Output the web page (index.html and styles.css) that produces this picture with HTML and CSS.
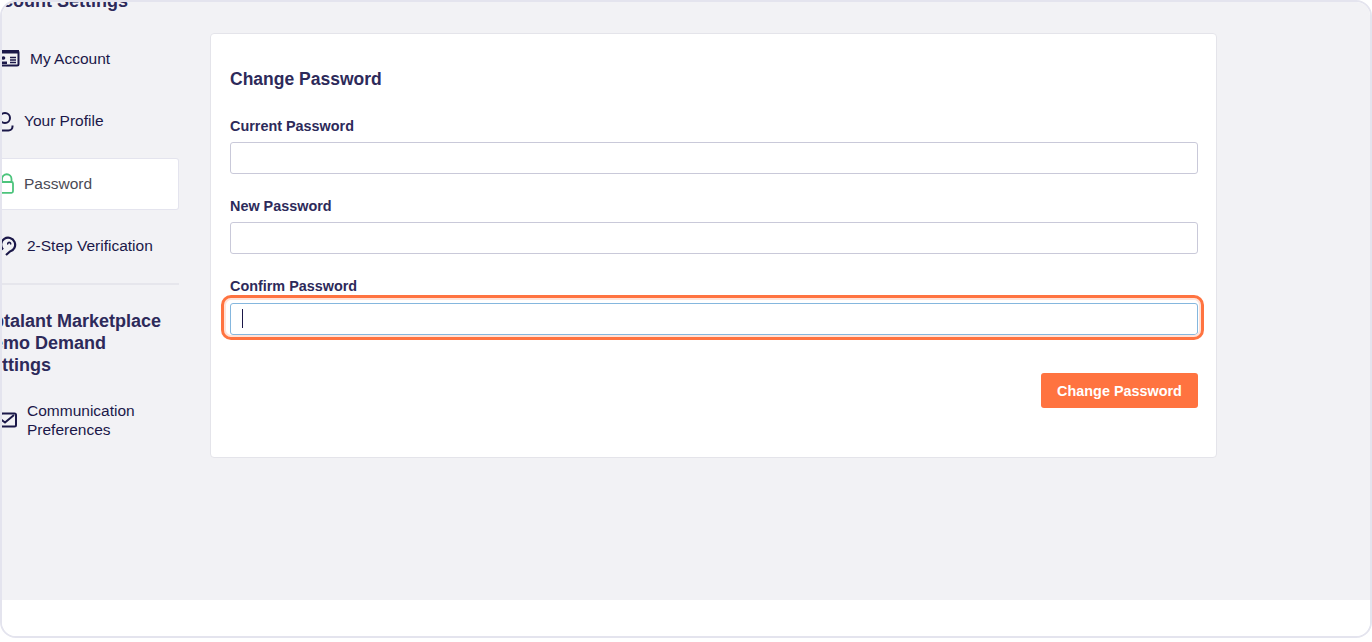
FILE: index.html

```html
<!DOCTYPE html>
<html lang="en">
<head>
  <meta charset="UTF-8">
  <title>Change Password</title>
  <link rel="stylesheet" href="styles.css">
</head>
<body>
  <div class="frame">
    <div class="content">
      <aside class="sidebar">
        <h3 class="side-title first">Account Settings</h3>
        <a class="side-item">
          <svg class="icon icon-wide" viewBox="0 0 24 18"><rect x="5" y="2" width="17.5" height="14.5" rx="1.5" fill="none" stroke="#1b1849" stroke-width="2"/><path d="M5 1h18v3.5H5z" fill="#1b1849"/><circle cx="7.5" cy="9" r="1.8" fill="#1b1849"/><path d="M5 15h6v-2.5H5z" fill="#1b1849"/><path d="M14 8.5h6M14 11h6M14 13.5h6" stroke="#1b1849" stroke-width="1.4"/></svg>
          <span>My Account</span>
        </a>
        <a class="side-item">
          <svg class="icon icon-narrow" viewBox="0 0 18 22"><circle cx="9" cy="8" r="5" fill="none" stroke="#1b1849" stroke-width="2"/><path d="M16.5 15.5v1a4 4 0 0 1-4 4H3" fill="none" stroke="#1b1849" stroke-width="2"/></svg>
          <span>Your Profile</span>
        </a>
        <a class="side-item active">
          <svg class="icon icon-narrow" viewBox="0 0 18 22"><path d="M6 10V7a4.75 4.75 0 0 1 9.5 0v3" fill="none" stroke="#4cc47c" stroke-width="1.8"/><rect x="1" y="10" width="16" height="10.8" rx="1.5" fill="none" stroke="#4cc47c" stroke-width="1.8"/></svg>
          <span>Password</span>
        </a>
        <a class="side-item">
          <svg class="icon icon-mid" viewBox="0 0 21 20"><path d="M7 13.5A7 7 0 1 1 14 15.5L10 19" fill="none" stroke="#1b1849" stroke-width="2.2"/><path d="M12 8.5a1.4 1.4 0 1 1 2.4 0" fill="none" stroke="#1b1849" stroke-width="1.6"/></svg>
          <span>2-Step Verification</span>
        </a>
        <hr class="side-rule">
        <h3 class="side-title">Uptalant Marketplace<br>Demo Demand<br>Settings</h3>
        <a class="side-item">
          <svg class="icon icon-mid" viewBox="0 0 21 16"><rect x="5" y="1.5" width="15" height="13" rx="1.5" fill="none" stroke="#1b1849" stroke-width="2"/><path d="M5 7.5l4 3L18 3" fill="none" stroke="#1b1849" stroke-width="2"/></svg>
          <span>Communication<br>Preferences</span>
        </a>
      </aside>
      <main class="card">
        <h2>Change Password</h2>
        <form>
          <label>Current Password</label>
          <input type="password" class="field">
          <label>New Password</label>
          <input type="password" class="field">
          <label>Confirm Password</label>
          <div class="highlight">
            <div class="field focused"><i class="caret"></i></div>
          </div>
          <div class="actions">
            <button type="button" class="btn">Change Password</button>
          </div>
        </form>
      </main>
    </div>
    <div class="footer"></div>
  </div>
</body>
</html>
```

FILE: styles.css

```css
* {
  box-sizing: border-box;
}

html, body {
  margin: 0;
  height: 642px;
  overflow: hidden;
  background: white;
}

body {
  font-family: 'Liberation Sans', Arial, sans-serif;
  color: #1b1849;
}

.frame {
  width: 1372px;
  height: 638px;
  border: 2px solid #e4e4ee;
  border-radius: 16px;
  overflow: hidden;
  background: white;
}

.content {
  height: 598px;
  background: #f2f2f5;
  display: flex;
  align-items: flex-start;
  gap: 31px;
}

.footer {
  height: 36px;
  background: white;
}

/* left edge and top of the sidebar run out of the frame */
.sidebar {
  width: 199px;
  margin-left: -22px;
  margin-top: -12px;
  flex-shrink: 0;
}

.side-title {
  margin: 0 0 19px;
  font-size: 18px;
  line-height: 22px;
  font-weight: bold;
  color: #2d2a5a;
  white-space: nowrap;
}

.side-title.first {
  margin-bottom: 21px;
}

.side-item {
  display: flex;
  align-items: center;
  gap: 10px;
  height: 52px;
  margin-bottom: 10.5px;
  padding-left: 16px;
  padding-bottom: 2px;
  font-size: 15.5px;
  line-height: 19px;
  border: 1px solid transparent;
  border-left: 0;
  border-radius: 3px;
}

.side-item.active {
  background: white;
  border-color: #e4e4ee;
  color: #4a4a55;
}

.icon {
  flex-shrink: 0;
}

.icon-wide {
  width: 24px;
  height: 18px;
}

.icon-narrow {
  width: 18px;
  height: 22px;
}

.icon-mid {
  width: 21px;
  height: 20px;
}

.side-rule {
  margin: 0 0 25px;
  border: 0;
  border-top: 2px solid #e6e6ec;
}

.card {
  width: 1007px;
  height: 425px;
  margin-top: 31px;
  padding: 34px 18px 0 19px;
  background: white;
  border: 1px solid #e4e4ea;
  border-radius: 4px;
}

.card h2 {
  margin: 0 0 27px;
  font-size: 17.5px;
  line-height: 22px;
  color: #2d2a5a;
}

label {
  display: block;
  font-size: 14.4px;
  line-height: 18px;
  font-weight: bold;
  color: #2d2a5a;
  margin-bottom: 7px;
}

.field {
  display: block;
  width: 100%;
  height: 32px;
  margin-bottom: 23px;
  background: white;
  border: 1px solid #c9c9d9;
  border-radius: 3px;
}

.highlight {
  position: relative;
  margin-top: 8px;
}

/* orange callout ring round the focused input */
.highlight::after {
  content: "";
  position: absolute;
  top: -8px;
  left: -9px;
  right: -6px;
  bottom: -5px;
  border: 3px solid #ff7340;
  border-radius: 10px;
  box-shadow: inset 0 0 0 2px #ffe3d9;
}

.field.focused {
  margin-bottom: 0;
  border-color: #85b7de;
  padding: 5px 11px;
}

.caret {
  display: block;
  width: 1px;
  height: 19px;
  background: #1b1849;
}

.actions {
  display: flex;
  justify-content: flex-end;
  margin-top: 38px;
}

.btn {
  width: 157px;
  height: 35px;
  border: none;
  border-radius: 3px;
  background: #ff7340;
  color: white;
  font-family: inherit;
  font-size: 14.4px;
  font-weight: bold;
}
```
